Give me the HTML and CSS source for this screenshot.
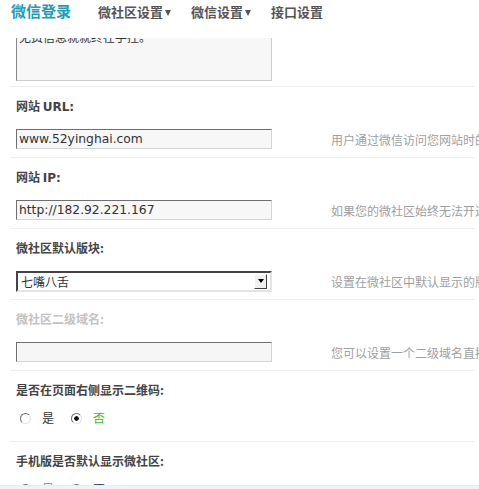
FILE: index.html
```html
<!DOCTYPE html>
<html lang="zh-CN">
<head>
<meta charset="utf-8">
<title>微信登录 - 设置</title>
<link rel="stylesheet" href="styles.css">
</head>
<body>
<header class="topbar">
  <span class="brand">微信登录</span>
  <nav class="nav">
    <a class="nav-item nav-first">微社区设置<i class="caret"></i></a>
    <a class="nav-item">微信设置<i class="caret"></i></a>
    <a class="nav-item">接口设置</a>
  </nav>
</header>
<main class="form">
  <div class="row row-first">
    <div class="ta-clip"><textarea class="ta">无费信息就就终在手控。</textarea></div>
  </div>
  <div class="row">
    <div class="label">网站 <span class="latin">URL:</span></div>
    <div class="field">
      <input class="text" type="text" value="www.52yinghai.com">
      <span class="desc">用户通过微信访问您网站时的地址</span>
    </div>
  </div>
  <div class="row">
    <div class="label">网站 <span class="latin">IP:</span></div>
    <div class="field">
      <input class="text" type="text" value="http://182.92.221.167">
      <span class="desc">如果您的微社区始终无法开通，请填写服务器IP</span>
    </div>
  </div>
  <div class="row">
    <div class="label">微社区默认版块:</div>
    <div class="field">
      <div class="select">
        <span class="select-value">七嘴八舌</span>
        <span class="select-btn"><i class="select-arrow"></i></span>
      </div>
      <span class="desc">设置在微社区中默认显示的版块</span>
    </div>
  </div>
  <div class="row">
    <div class="label label-disabled">微社区二级域名:</div>
    <div class="field">
      <input class="text" type="text" value="" disabled>
      <span class="desc">您可以设置一个二级域名直接访问微社区</span>
    </div>
  </div>
  <div class="row row-radio">
    <div class="label">是否在页面右侧显示二维码:</div>
    <div class="radios">
      <label class="opt"><input class="radio" type="radio" name="qr"><span>是</span></label>
      <label class="opt"><input class="radio" type="radio" name="qr" checked><span class="on">否</span></label>
    </div>
  </div>
  <div class="row row-radio">
    <div class="label">手机版是否默认显示微社区:</div>
    <div class="radios">
      <label class="opt"><input class="radio" type="radio" name="mb" checked><span class="on">是</span></label>
      <label class="opt"><input class="radio" type="radio" name="mb"><span>否</span></label>
    </div>
  </div>
</main>
<div class="bottom-edge"></div>
</body>
</html>
```

FILE: styles.css
```css
html {
  overflow: hidden;
  background: #fff;
}
body {
  margin: 0;
  font-family: "Noto Sans CJK SC", "DejaVu Sans", sans-serif;
  font-size: 12px;
  color: #333;
  background: #fff;
}
.topbar {
  height: 38px;
  display: flex;
  align-items: flex-start;
  padding-left: 11px;
  background: #fff;
}
.brand {
  font-size: 15px;
  font-weight: bold;
  line-height: 22px;
  color: #1d9bbb;
}
.nav {
  display: flex;
  margin-left: 27px;
}
.nav-item {
  display: flex;
  align-items: center;
  font-size: 13px;
  font-weight: bold;
  line-height: 24px;
  color: #555;
  margin-right: 20px;
  text-decoration: none;
}
.caret {
  display: inline-block;
  width: 0;
  height: 0;
  margin-left: 2px;
  margin-top: 1px;
  border-left: 3.5px solid transparent;
  border-right: 3.5px solid transparent;
  border-top: 6px solid #555;
}
.form {
  width: 465px;
  margin-left: 10px;
}
.row {
  padding: 11px 0 8px 6px;
  border-bottom: 1px solid #efefef;
  white-space: nowrap;
}
.row-first {
  padding-top: 0;
  padding-bottom: 5px;
}
.ta-clip {
  height: 43px;
  overflow: hidden;
}
.ta {
  display: block;
  box-sizing: border-box;
  width: 256px;
  height: 55px;
  margin: -12px 0 0 0;
  padding: 2px 2px;
  border: 1px solid;
  border-color: #888 #ccc #ccc #888;
  background: #f7f7f7;
  font-family: "Noto Sans CJK SC", sans-serif;
  font-size: 12px;
  line-height: 15px;
  color: #333;
  resize: none;
}
.label {
  font-weight: bold;
  line-height: 16px;
  height: 16px;
  margin-bottom: 15px;
  color: #444;
}
.latin {
  font-family: "DejaVu Sans", sans-serif;
  font-size: 12px;
}
.label-disabled {
  color: #c2c2c2;
}
.field {
  display: flex;
  align-items: center;
  height: 20px;
}
.text {
  flex: none;
  box-sizing: border-box;
  width: 256px;
  height: 20px;
  margin: 0;
  padding: 0 2px;
  border: 1px solid;
  border-color: #6f6f6f #d4d4d4 #d4d4d4 #6f6f6f;
  background: #f7f7f7;
  font-family: "DejaVu Sans", sans-serif;
  font-size: 12.3px;
  color: #333;
  outline: none;
}
.text:disabled {
  background: #f6f6f6;
}
.desc {
  flex: none;
  margin-left: 59px;
  color: #a0a0a0;
  font-size: 12px;
}
.select {
  flex: none;
  box-sizing: border-box;
  width: 256px;
  height: 21px;
  display: flex;
  align-items: center;
  justify-content: space-between;
  border: 2px solid;
  border-color: #444 #e4e4e4 #e4e4e4 #444;
  background: #fff;
  padding: 0 3px 0 3px;
}
.select-value {
  color: #333;
}
.select-btn {
  box-sizing: border-box;
  width: 13px;
  height: 15px;
  display: flex;
  align-items: center;
  justify-content: center;
  background: #f0f0f0;
  border: 1px solid;
  border-color: #fff #404040 #404040 #fff;
}
.select-arrow {
  display: block;
  width: 0;
  height: 0;
  border-left: 3.5px solid transparent;
  border-right: 3.5px solid transparent;
  border-top: 4px solid #000;
}
.row-radio {
  padding-bottom: 13px;
}
.row-radio .label {
  margin-bottom: 10px;
}
.radios {
  display: flex;
  align-items: center;
  height: 20px;
  padding-left: 4px;
}
.opt {
  display: flex;
  align-items: center;
  margin-right: 17px;
}
.radio {
  -webkit-appearance: none;
  appearance: none;
  flex: none;
  box-sizing: border-box;
  width: 11px;
  height: 11px;
  margin: 0 11px 0 0;
  border: 1px solid;
  border-color: #6a6a6a #e2e2e2 #e2e2e2 #6a6a6a;
  border-radius: 50%;
  background: #fff;
}
.radio:checked {
  background: radial-gradient(circle, #111 0, #111 2px, #fff 2.5px);
}
.opt span {
  color: #333;
  line-height: 16px;
}
.opt .on {
  color: #2bbf2b;
}
.bottom-edge {
  position: fixed;
  left: 0;
  right: 0;
  bottom: 0;
  height: 3px;
  background: #f1f1f7;
  border-top: 1px solid #ebebf3;
}
```
